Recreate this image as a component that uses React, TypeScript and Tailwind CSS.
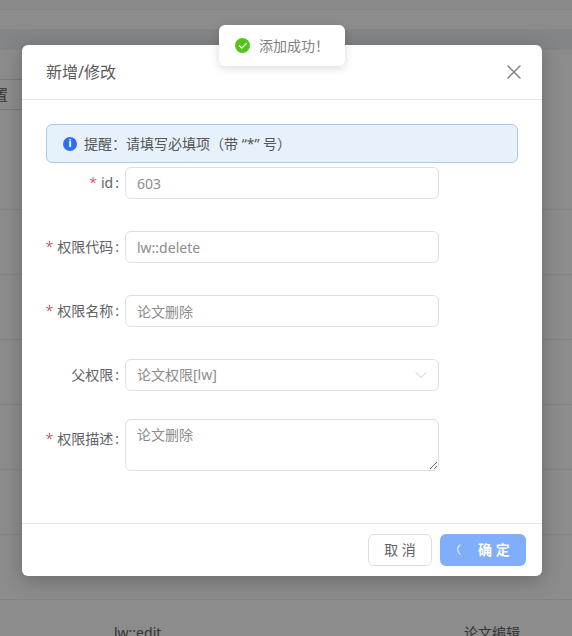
import React from "react";
import { X, ChevronDown, Check } from "lucide-react";

const rows = [0, 1, 2, 3, 4, 5];

function Label({ text, required }: { text: string; required?: boolean }) {
  return (
    <label className="w-[79px] shrink-0 pr-[6px] h-8 flex items-center justify-end text-sm text-[#606266] whitespace-nowrap">
      {required && <span className="text-[#c0263c] mr-1 font-light">*</span>}
      {text}
      <span className="ml-[2px]">:</span>
    </label>
  );
}

function TextInput({ value }: { value: string }) {
  return (
    <input
      readOnly
      defaultValue={value}
      className="w-[314px] h-8 px-[11px] border border-[#dcdfe6] rounded-[6px] text-sm text-[#8c8c8c] outline-none"
    />
  );
}

export default function App() {
  return (
    <div className="relative w-[572px] h-[636px] overflow-hidden bg-white font-['Noto_Sans','Noto_Sans_CJK_SC',sans-serif]">
      {/* page behind the modal */}
      <div className="flex flex-col">
        <div className="h-[10px] border-b border-[#f4f4f4] bg-[#fcfcfc]" />
        <div className="h-[20px] border-b border-[#f4f4f4]" />
        <div className="h-[20px] bg-[#f0f2f5]" />
        <div className="h-[29px]" />
        <div className="h-[31px] flex items-center">
          <div className="h-[31px] w-6 border-y border-[#dcdfe6] text-sm text-[#606266] flex items-center justify-end pr-4 overflow-hidden">
            置
          </div>
        </div>
        <div className="h-[100px] border-b border-[#ebeef5]" />
        {rows.map((r) => (
          <div key={r} className="h-[65px] border-b border-[#ebeef5] shrink-0" />
        ))}
        <div className="h-[36px] text-sm text-[#606266]">
          <div className="flex justify-between pl-[114px] pr-[52px] pt-[23px]">
            <span>lw::edit</span>
            <span>论文编辑</span>
          </div>
        </div>
      </div>

      {/* overlay */}
      <div className="absolute inset-0 bg-black/45" />

      {/* modal */}
      <div className="absolute left-[22px] top-[45px] w-[520px] h-[531px] bg-white rounded-[6px] shadow-[0_4px_20px_rgba(0,0,0,0.25)] flex flex-col">
        <div className="h-[55px] shrink-0 border-b border-[#e8e8e8] flex items-center justify-between pl-6 pr-4">
          <span className="text-base text-[#5a5a5a]">新增/修改</span>
          <X size={24} strokeWidth={1.4} className="text-[#808080]" />
        </div>
        <div className="flex-1 px-6 pt-6">
          <div className="h-[39px] w-[472px] bg-[#e6f1fc] border border-[#abc9e8] rounded-[6px] flex items-center pl-4 text-sm text-[#555555]">
            <span className="w-[14px] h-[14px] rounded-full bg-[#2d6ff0] text-white text-[10px] font-bold flex items-center justify-center mr-[7px]">
              i
            </span>
            提醒：请填写必填项（带 “*” 号）
          </div>
          <div className="mt-1 flex flex-col gap-8 w-[393px]">
            <div className="flex">
              <Label text="id" required />
              <TextInput value="603" />
            </div>
            <div className="flex">
              <Label text="权限代码" required />
              <TextInput value="lw::delete" />
            </div>
            <div className="flex">
              <Label text="权限名称" required />
              <TextInput value="论文删除" />
            </div>
            <div className="flex">
              <Label text="父权限" />
              <div className="w-[314px] h-8 pl-[11px] pr-[7px] border border-[#dcdfe6] rounded-[6px] text-sm text-[#8c8c8c] flex items-center justify-between">
                <span>论文权限[lw]</span>
                <ChevronDown size={20} strokeWidth={1.2} className="text-[#c5c8ce]" />
              </div>
            </div>
            <div className="flex -mt-1">
              <div className="pt-1">
                <Label text="权限描述" required />
              </div>
              <textarea
                readOnly
                defaultValue="论文删除"
                className="w-[314px] h-[52px] px-[11px] py-[5px] border border-[#dcdfe6] rounded-[6px] text-sm text-[#8c8c8c] outline-none"
              />
            </div>
          </div>
        </div>
        <div className="h-[53px] shrink-0 border-t border-[#e8e8e8] flex items-start justify-end gap-2 pt-[10px] pr-4">
          <button className="w-16 h-8 border border-[#dcdfe6] rounded-[6px] text-sm text-[#606266]">
            取 消
          </button>
          <button className="w-[86px] h-8 rounded-[6px] bg-[#80aefa] text-sm text-white font-semibold flex items-center pl-[14px]">
            <svg width="10" height="14" viewBox="0 0 10 14" fill="none" className="mr-[14px]">
              <path d="M6 2 C3 4 3 9 6 11" stroke="#dbe8fe" strokeWidth="1.3" strokeLinecap="round" />
            </svg>
            确 定
          </button>
        </div>
      </div>

      {/* toast */}
      <div className="absolute left-[219px] top-[25px] w-[126px] h-[41px] bg-white rounded-[6px] shadow-[0_2px_10px_rgba(0,0,0,0.15)] flex items-center pl-4 text-sm text-[#808080] whitespace-nowrap">
        <span className="w-[15px] h-[15px] rounded-full bg-[#52c41a] flex items-center justify-center mr-[9px]">
          <Check size={10} strokeWidth={3} className="text-white" />
        </span>
        添加成功！
      </div>
    </div>
  );
}
